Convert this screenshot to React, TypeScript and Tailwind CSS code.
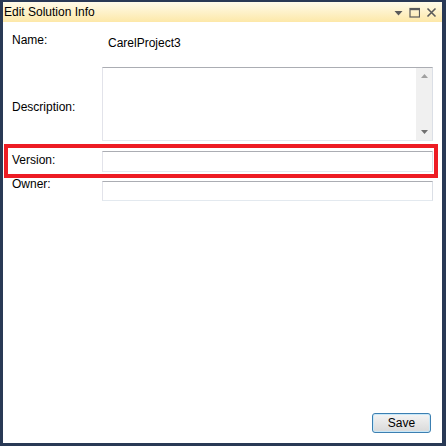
import React from "react";

const font = { fontFamily: '"Liberation Sans", Arial, sans-serif' };

function TitleButtons() {
  return (
    <div className="flex items-center gap-[6px] pr-[5px] text-[#5a5a5a]">
      <svg width="9" height="9" viewBox="0 0 9 9">
        <path d="M0.5 3h8L4.5 7.5z" fill="currentColor" />
      </svg>
      <svg width="11" height="11" viewBox="0 0 11 11">
        <rect x="1" y="1.5" width="9.5" height="8.5" fill="none" stroke="currentColor" strokeWidth="1.2" />
        <rect x="1" y="1" width="9.5" height="2.2" fill="currentColor" />
      </svg>
      <svg width="11" height="11" viewBox="0 0 11 11">
        <path d="M1.5 1.5l8 8M9.5 1.5l-8 8" stroke="currentColor" strokeWidth="1.6" />
      </svg>
    </div>
  );
}

function TextBox({ className = "" }: { className?: string }) {
  return (
    <div
      className={
        "border border-t-[#abadb3] border-l-[#e2e3ea] border-r-[#dbdfe6] border-b-[#e3e9ef] bg-white " +
        className
      }
    />
  );
}

function Label({ text, offset }: { text: string; offset: string }) {
  return <div className={"w-[90px] shrink-0 pl-[9px] text-[12px] leading-[16px] text-black " + offset}>{text}</div>;
}

export default function App() {
  return (
    <div className="h-[446px] w-[446px] bg-[#293955] pb-[3px] pl-[3px] pr-[4px] pt-[2px]" style={font}>
      <div className="relative flex h-full flex-col bg-white">
        <div className="flex h-[20px] items-center justify-between bg-gradient-to-b from-[#fffbea] to-[#fde8a8] pl-[1px]">
          <span className="text-[12px] leading-[16px] text-black">Edit Solution Info</span>
          <TitleButtons />
        </div>

        <div className="flex h-[45px]">
          <Label text="Name:" offset="pt-[10px]" />
          <div className="pl-[15px] pt-[13px] text-[12px] leading-[16px] text-black">CarelProject3</div>
        </div>

        <div className="flex h-[74px]">
          <Label text="Description:" offset="pt-[32px]" />
          <div className="ml-[9px] mr-[9px] flex flex-1 border border-t-[#abadb3] border-l-[#e2e3ea] border-r-[#dbdfe6] border-b-[#e3e9ef]">
            <div className="flex-1" />
            <div className="flex w-[16px] flex-col items-center justify-between bg-[#f0f0f0] py-[6px]">
              <svg width="7" height="4" viewBox="0 0 7 4">
                <path d="M0 4L3.5 0L7 4z" fill="#a0a0a0" />
              </svg>
              <svg width="7" height="4" viewBox="0 0 7 4">
                <path d="M0 0L3.5 4L7 0z" fill="#707070" />
              </svg>
            </div>
          </div>
        </div>

        <div className="mt-[10px] flex h-[21px]">
          <Label text="Version:" offset="mt-[1px]" />
          <TextBox className="ml-[9px] mr-[9px] flex-1" />
        </div>

        <div className="mt-[9px] flex h-[20px]">
          <Label text="Owner:" offset="-mt-[5px]" />
          <TextBox className="ml-[9px] mr-[9px] flex-1" />
        </div>

        <div className="flex-1" />

        <div className="flex justify-end pb-[10px] pr-[11px]">
          <button className="h-[20px] w-[59px] rounded-[3px] border border-[#3c7fb1] bg-gradient-to-b from-[#f4f4f4] to-[#d9d9d9] text-[12px] leading-[16px] text-black shadow-[inset_0_0_0_1px_#c8e8f9]">
            Save
          </button>
        </div>

        <div className="pointer-events-none absolute left-[1px] top-[142px] h-[34px] w-[434px] border-[4px] border-[#ed1c24]" />
      </div>
    </div>
  );
}
